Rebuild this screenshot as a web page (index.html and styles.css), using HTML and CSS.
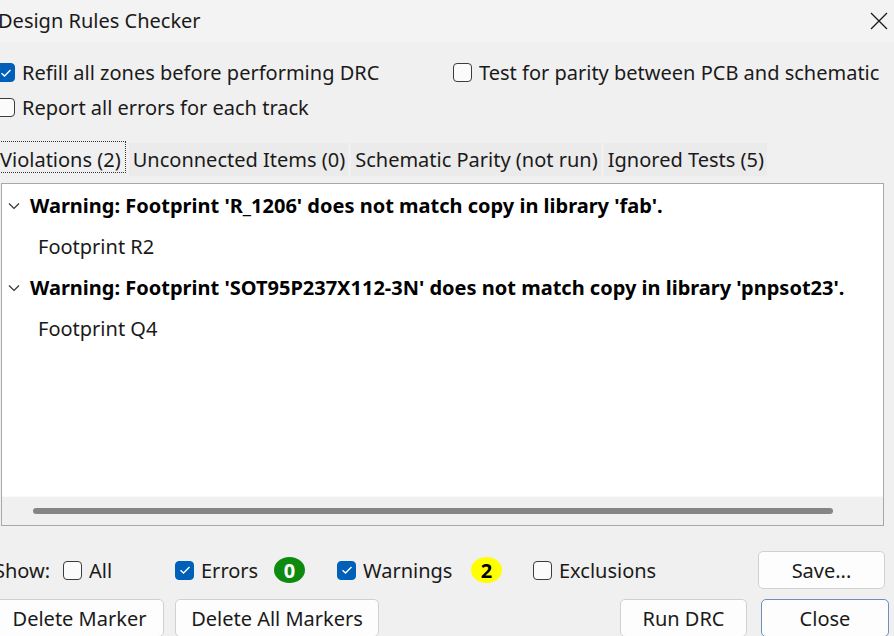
FILE: index.html
```html
<!DOCTYPE html>
<html>
<head>
<meta charset="utf-8">
<link rel="stylesheet" href="styles.css">
</head>
<body>
<div class="dialog">
  <div class="titlebar">
    <span class="title">Design Rules Checker</span>
    <svg class="close-x" width="18" height="18" viewBox="0 0 18 18"><path d="M1 1L17 17M17 1L1 17" stroke="#1a1a1a" stroke-width="1.3" fill="none"/></svg>
  </div>

  <div class="options">
    <label class="opt"><span class="cb checked"><svg width="12" height="10" viewBox="0 0 12 10"><path d="M1.5 5.2L4.5 8L10.5 2" stroke="#fff" stroke-width="1.4" fill="none"/></svg></span>Refill all zones before performing DRC</label>
    <label class="opt"><span class="cb"></span>Test for parity between PCB and schematic</label>
    <label class="opt"><span class="cb"></span>Report all errors for each track</label>
  </div>

  <div class="tabs">
    <div class="tab active">Violations (2)</div>
    <div class="tab">Unconnected Items (0)</div>
    <div class="tab">Schematic Parity (not run)</div>
    <div class="tab">Ignored Tests (5)</div>
  </div>

  <div class="panel">
    <div class="list">
      <div class="item">
        <svg class="chev" width="12" height="8" viewBox="0 0 12 8"><path d="M1 1.5L6 6.5L11 1.5" stroke="#333" stroke-width="1.2" fill="none"/></svg>
        <span class="warn">Warning: Footprint 'R_1206' does not match copy in library 'fab'.</span>
      </div>
      <div class="child">Footprint R2</div>
      <div class="item">
        <svg class="chev" width="12" height="8" viewBox="0 0 12 8"><path d="M1 1.5L6 6.5L11 1.5" stroke="#333" stroke-width="1.2" fill="none"/></svg>
        <span class="warn">Warning: Footprint 'SOT95P237X112-3N' does not match copy in library 'pnpsot23'.</span>
      </div>
      <div class="child">Footprint Q4</div>
    </div>
    <div class="hscroll"><div class="thumb"></div></div>
  </div>

  <div class="showrow">
    <span class="showlbl">Show:</span>
    <label class="opt"><span class="cb"></span>All</label>
    <label class="opt"><span class="cb checked"><svg width="12" height="10" viewBox="0 0 12 10"><path d="M1.5 5.2L4.5 8L10.5 2" stroke="#fff" stroke-width="1.4" fill="none"/></svg></span>Errors</label>
    <span class="badge green">0</span>
    <label class="opt"><span class="cb checked"><svg width="12" height="10" viewBox="0 0 12 10"><path d="M1.5 5.2L4.5 8L10.5 2" stroke="#fff" stroke-width="1.4" fill="none"/></svg></span>Warnings</label>
    <span class="badge yellow">2</span>
    <label class="opt"><span class="cb"></span>Exclusions</label>
    <button class="btn save">Save...</button>
  </div>

  <div class="btnrow">
    <button class="btn b-del">Delete Marker</button>
    <button class="btn b-delall">Delete All Markers</button>
    <span class="spacer"></span>
    <button class="btn b-run">Run DRC</button>
    <button class="btn b-close">Close</button>
  </div>
</div>
</body>
</html>
```

FILE: styles.css
```css
* { box-sizing: border-box; }
html, body {
  margin: 0;
  padding: 0;
  width: 894px;
  height: 636px;
  overflow: hidden;
  background: #f0f0f0;
}
body {
  font-family: "Segoe UI", "Noto Sans", "Open Sans", sans-serif;
  font-size: 20px;
  color: #1a1a1a;
}
.dialog {
  width: 900px;
  margin-left: -4px;
}
.titlebar {
  height: 42px;
  background: #f3f3f3;
  display: flex;
  align-items: center;
  justify-content: space-between;
  padding: 0 0 1px 0;
}
.title {
  margin-left: 2px;
  font-size: 20px;
  white-space: nowrap;
}
.close-x { margin-right: 8px; margin-top: 1px; }

.options {
  display: grid;
  grid-template-columns: 457px 1fr;
  row-gap: 8px;
  padding-top: 17px;
}
.opt {
  display: flex;
  align-items: center;
  height: 27px;
  white-space: nowrap;
}
.cb {
  width: 19px;
  height: 19px;
  border: 1px solid #3c3c3c;
  border-radius: 4px;
  background: #fbfbfb;
  margin-right: 7px;
  display: inline-flex;
  align-items: center;
  justify-content: center;
  flex: none;
}
.cb.checked {
  background: #005fb8;
  border-color: #005fb8;
}

.tabs {
  display: flex;
  gap: 3px;
  margin-top: 19px;
  height: 36px;
  align-items: flex-end;
}
.tab {
  height: 33px;
  padding: 0 3px 0 4px;
  background: #ebebeb;
  display: flex;
  align-items: center;
  white-space: nowrap;
}
.tab.active {
  background: #f0f0f0;
  height: 32px;
  padding: 4px 4px 0 4px;
  border: 1px dotted #333;
  border-left: none;
  margin-bottom: 3px;
}

.panel {
  margin-left: 5px;
  margin-top: 7px;
  width: 883px;
  height: 343px;
  border: 1px solid #a8a8a8;
  background: #fff;
  display: flex;
  flex-direction: column;
}
.list {
  flex: 1;
  padding-top: 1px;
}
.item {
  height: 41px;
  display: flex;
  align-items: center;
  font-weight: bold;
  color: #000;
  white-space: nowrap;
}
.chev {
  margin-left: 6px;
  margin-right: 10px;
}
.child {
  height: 41px;
  display: flex;
  align-items: center;
  padding-left: 36px;
}
.hscroll {
  height: 29px;
  background: #f0f0f0;
  border-top: 1px solid #fafafa;
  display: flex;
  align-items: center;
  padding-left: 31px;
}
.thumb {
  width: 800px;
  height: 6px;
  background: #858585;
  border-radius: 3px;
}

.showrow {
  display: grid;
  grid-template-columns: 69px 112px 99px 63px 134px 62px 225px 127px;
  align-items: center;
  margin-top: 25px;
  height: 38px;
  margin-left: -2px;
}
.showlbl { white-space: nowrap; }
.badge {
  width: 31px;
  height: 26px;
  border-radius: 50%;
  display: flex;
  align-items: center;
  justify-content: center;
  font-weight: bold;
  font-size: 20px;
}
.badge.green { background: #0e8a0e; color: #fff; }
.badge.yellow { background: #ffff00; color: #000; }

.btn {
  font: inherit;
  color: #1a1a1a;
  background: #fdfdfd;
  border: 1px solid #d0d0d0;
  border-radius: 5px;
  height: 38px;
  padding: 0;
  white-space: nowrap;
}
.save { width: 127px; }
.btnrow {
  display: flex;
  margin-top: 10px;
  height: 40px;
}
.b-del { width: 169px; margin-left: -1px; }
.b-delall { width: 204px; margin-left: 11px; }
.spacer { flex: 1; }
.b-run { width: 127px; }
.b-close { width: 128px; margin-left: 14px; margin-right: 7px; border-color: #6e8fb8; }
```
